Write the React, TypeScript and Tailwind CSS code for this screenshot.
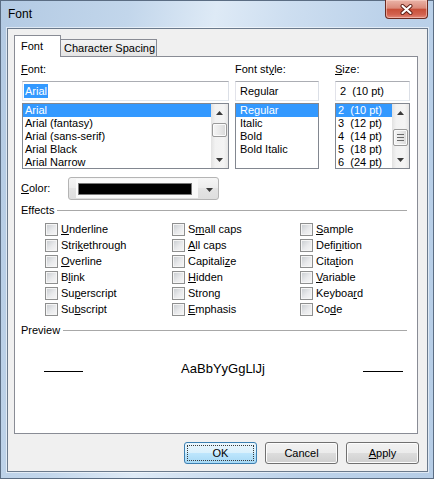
import React from "react";

// accelerator label: underlines one character
function Acc({ t, i }: { t: string; i: number }) {
  return (
    <>
      {t.slice(0, i)}
      <span className="underline">{t[i]}</span>
      {t.slice(i + 1)}
    </>
  );
}

const EFFECTS: [string, number][][] = [
  [["Underline", 0], ["Strikethrough", 4], ["Overline", 0], ["Blink", 1], ["Superscript", 2], ["Subscript", 2]],
  [["Small caps", 1], ["All caps", 0], ["Capitalize", 8], ["Hidden", 0], ["Strong", 5], ["Emphasis", 0]],
  [["Sample", 0], ["Definition", 4], ["Citation", 4], ["Variable", 0], ["Keyboard", 6], ["Code", 2]],
];

function Check({ t, i }: { t: string; i: number }) {
  return (
    <div className="flex h-[16px] items-center">
      <span className="h-[13px] w-[13px] shrink-0 border border-[#8e8f8f] bg-[linear-gradient(135deg,#c6cace,#e9eaec_55%,#f7f7f7)] shadow-[inset_0_0_0_1px_#f5f5f5]" />
      <span className="ml-[3px] whitespace-nowrap text-[11px] leading-[13px]">
        <Acc t={t} i={i} />
      </span>
    </div>
  );
}

function Arrow({ down }: { down?: boolean }) {
  return (
    <svg width="7" height="4" viewBox="0 0 7 4">
      <polygon points={down ? "0,0 7,0 3.5,4" : "3.5,0 7,4 0,4"} fill="#3a3a3a" />
    </svg>
  );
}

function VScroll({ thumb, grip }: { thumb: string; grip?: boolean }) {
  return (
    <div className="flex w-[17px] shrink-0 flex-col bg-[linear-gradient(90deg,#e2e2e2,#f2f2f2_25%,#f4f4f4_75%,#e6e6e6)]">
      <div className="flex h-[17px] items-center justify-center">
        <Arrow />
      </div>
      <div className="flex-1">
        <div
          className={`${thumb} mx-px flex items-center justify-center rounded-[2px] border border-[#9a9a9a] bg-[linear-gradient(90deg,#f5f5f5,#e9e9e9_50%,#d9d9d9)] shadow-[inset_0_0_0_1px_#fbfbfb]`}
        >
          {grip && (
            <div className="flex w-[7px] flex-col gap-[2px]">
              <span className="h-px bg-[#6a6a6a]" />
              <span className="h-px bg-[#6a6a6a]" />
              <span className="h-px bg-[#6a6a6a]" />
            </div>
          )}
        </div>
      </div>
      <div className="flex h-[17px] items-center justify-center">
        <Arrow down />
      </div>
    </div>
  );
}

function ListRows({ items, pad }: { items: string[]; pad: string }) {
  return (
    <div className="flex-1 overflow-hidden">
      {items.map((it, n) => (
        <div
          key={it}
          className={`${pad} h-[13px] whitespace-pre text-[11px] leading-[13px] ${n === 0 ? "bg-[#3399ff] text-white" : ""}`}
        >
          {it}
        </div>
      ))}
    </div>
  );
}

const INPUT = "flex h-[20px] items-center border border-[#abadb3] border-b-[#e3e9ef] border-l-[#e2e3ea] border-r-[#dbdfe6] bg-white text-[11px]";
const LIST = "mt-[2px] flex h-[66px] border border-[#828790] bg-white";

function Button({ children, def }: { children: React.ReactNode; def?: boolean }) {
  return (
    <div
      className={`flex h-[22px] w-[73px] rounded-[3px] border text-[11px] ${
        def
          ? "border-[#3c7fb1] bg-[linear-gradient(#eaf6fd,#d9f0fc_50%,#bee6fd_50%,#a7d9f5)] p-[2px]"
          : "border-[#707070] bg-[linear-gradient(#f2f2f2,#ebebeb_50%,#dddddd_50%,#cfcfcf)] shadow-[inset_0_0_0_1px_#fcfcfc]"
      }`}
    >
      <div className={`flex flex-1 items-center justify-center ${def ? "border border-dotted border-[#3a3a3a]" : ""}`}>
        {children}
      </div>
    </div>
  );
}

export default function App() {
  return (
    <div className="flex h-[479px] w-[434px] flex-col border border-[#5b6d83] bg-[linear-gradient(100deg,#b3cae3_0%,#c2d6eb_25%,#deeaf6_42%,#cddef0_56%,#bcd2ea_75%,#b6cde6_100%)] font-['Liberation_Sans',Arial,sans-serif] text-black">
      {/* title bar */}
      <div className="flex h-[27px] shrink-0 items-start justify-between pl-[7px] pr-[5px]">
        <span className="pt-[6px] text-[12px] leading-[14px]">Font</span>
        <div className="-mt-px flex h-[19px] w-[43px] items-center justify-center rounded-b-[4px] border border-t-0 border-[#6b2a20] bg-[linear-gradient(#eab4a8,#db8a7a_45%,#c8503a_52%,#d2624f_80%,#e2897a)] shadow-[inset_0_0_0_1px_rgba(255,220,210,0.5)]">
          <svg width="15" height="11" viewBox="0 0 15 11">
            <path d="M3.5 2 L11.5 9 M11.5 2 L3.5 9" stroke="#5c1d14" strokeWidth="4" strokeLinecap="round" />
            <path d="M3.5 2 L11.5 9 M11.5 2 L3.5 9" stroke="#ffffff" strokeWidth="2.2" strokeLinecap="round" />
          </svg>
        </div>
      </div>

      {/* client area */}
      <div className="ml-[6px] mr-[5px] flex h-[444px] shrink-0 flex-col border border-[#6b7a8c] bg-[#f0f0f0] pl-[6px] pt-[6px] shadow-[0_0_0_1px_rgba(255,255,255,0.55)]">
        {/* tabs */}
        <div className="flex h-[21px] items-end">
          <div className="relative z-10 -mb-px flex h-[22px] w-[47px] items-center border border-b-0 border-[#898c95] bg-white pl-[6px] text-[11px]">
            Font
          </div>
          <div className="-ml-px flex h-[17px] w-[97px] items-center border border-b-0 border-[#898c95] bg-[linear-gradient(#f4f4f4,#e4e4e4)] pl-[3px] text-[11px]">
            Character Spacing
          </div>
        </div>

        {/* panel */}
        <div className="flex h-[378px] w-[404px] flex-col border border-[#898c95] bg-white pl-[7px] pt-[6px]">
          <div className="flex items-start">
            <div className="flex w-[207px] flex-col">
              <div className="-ml-px h-[13px] text-[11px] leading-[13px]">
                <Acc t="Font:" i={0} />
              </div>
              <div className={`${INPUT} mt-[5px] pl-px`}>
                <span className="bg-[#3399ff] px-px leading-[14px] text-white">Arial</span>
              </div>
              <div className={LIST}>
                <ListRows pad="pl-[2px]" items={["Arial", "Arial (fantasy)", "Arial (sans-serif)", "Arial Black", "Arial Narrow"]} />
                <VScroll thumb="mt-[2px] h-[14px]" />
              </div>
            </div>

            <div className="ml-[6px] flex w-[84px] flex-col">
              <div className="h-[13px] text-[11px] leading-[13px]">
                <Acc t="Font style:" i={7} />
              </div>
              <div className={`${INPUT} mt-[5px] pl-[4px]`}>Regular</div>
              <div className={LIST}>
                <ListRows pad="pl-[4px]" items={["Regular", "Italic", "Bold", "Bold Italic"]} />
              </div>
            </div>

            <div className="ml-[16px] flex w-[75px] flex-col">
              <div className="h-[13px] text-[11px] leading-[13px]">
                <Acc t="Size:" i={0} />
              </div>
              <div className={`${INPUT} mt-[5px] whitespace-pre pl-[4px]`}>2  (10 pt)</div>
              <div className={LIST}>
                <ListRows pad="pl-[2px]" items={["2  (10 pt)", "3  (12 pt)", "4  (14 pt)", "5  (18 pt)", "6  (24 pt)"]} />
                <VScroll thumb="mt-[8px] h-[17px]" grip />
              </div>
            </div>
          </div>

          {/* color */}
          <div className="mt-[8px] flex h-[23px] items-center">
            <span className="-ml-px w-[47px] text-[11px] leading-[13px]">
              <Acc t="Color:" i={0} />
            </span>
            <div className="flex h-[23px] w-[151px] items-center rounded-[3px] border border-[#b4b4b4] bg-[linear-gradient(#f6f6f6,#ececec_50%,#e4e4e4_50%,#dedede)] pl-[7px]">
              <div className="flex h-[19px] w-[122px] items-center bg-[#fafafa] pl-[2px]">
                <span className="h-[12px] w-[114px] border border-[#7a7a7a] bg-black" />
              </div>
              <div className="flex flex-1 items-center justify-center pl-[2px] pt-[2px]">
                <Arrow down />
              </div>
            </div>
          </div>

          {/* effects */}
          <div className="mt-[4px] flex h-[13px] items-center">
            <span className="-ml-px text-[11px] leading-[13px]">Effects</span>
            <span className="ml-[3px] mr-[10px] h-px flex-1 bg-[#a8a8a8]" />
          </div>
          <div className="ml-[23px] mt-[4px] flex">
            {EFFECTS.map((col, c) => (
              <div key={c} className={`flex flex-col ${c === 0 ? "w-[127px]" : c === 1 ? "w-[128px]" : ""}`}>
                {col.map(([t, i]) => (
                  <Check key={t} t={t} i={i} />
                ))}
              </div>
            ))}
          </div>

          {/* preview */}
          <div className="mt-[7px] flex h-[13px] items-center">
            <span className="-ml-px text-[11px] leading-[13px]">Preview</span>
            <span className="ml-[3px] mr-[10px] h-px flex-1 bg-[#a8a8a8]" />
          </div>
          <div className="ml-[22px] mt-[22px] flex h-[20px] w-[359px] items-start justify-between">
            <span className="mt-[12px] h-px w-[39px] bg-black" />
            <span className="text-[13px] leading-[20px]">AaBbYyGgLlJj</span>
            <span className="mt-[12px] h-px w-[40px] bg-black" />
          </div>
        </div>

        {/* buttons */}
        <div className="mt-[8px] flex justify-end gap-[8px] pr-[8px]">
          <Button def>OK</Button>
          <Button>Cancel</Button>
          <Button>
            <Acc t="Apply" i={0} />
          </Button>
        </div>
      </div>
    </div>
  );
}
